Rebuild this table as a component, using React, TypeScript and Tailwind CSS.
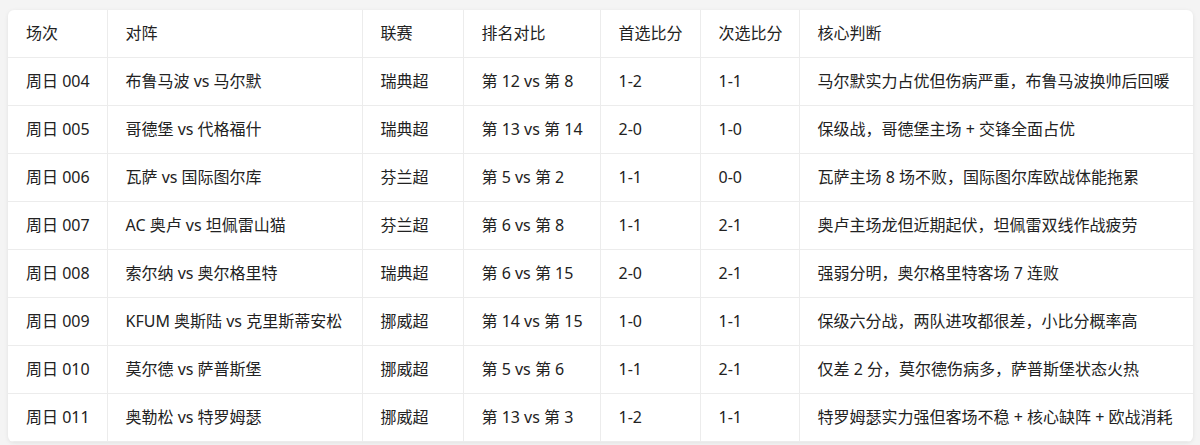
const rows = [
  ["周日 004", "布鲁马波 vs 马尔默", "瑞典超", "第 12 vs 第 8", "1-2", "1-1", "马尔默实力占优但伤病严重，布鲁马波换帅后回暖"],
  ["周日 005", "哥德堡 vs 代格福什", "瑞典超", "第 13 vs 第 14", "2-0", "1-0", "保级战，哥德堡主场 + 交锋全面占优"],
  ["周日 006", "瓦萨 vs 国际图尔库", "芬兰超", "第 5 vs 第 2", "1-1", "0-0", "瓦萨主场 8 场不败，国际图尔库欧战体能拖累"],
  ["周日 007", "AC 奥卢 vs 坦佩雷山猫", "芬兰超", "第 6 vs 第 8", "1-1", "2-1", "奥卢主场龙但近期起伏，坦佩雷双线作战疲劳"],
  ["周日 008", "索尔纳 vs 奥尔格里特", "瑞典超", "第 6 vs 第 15", "2-0", "2-1", "强弱分明，奥尔格里特客场 7 连败"],
  ["周日 009", "KFUM 奥斯陆 vs 克里斯蒂安松", "挪威超", "第 14 vs 第 15", "1-0", "1-1", "保级六分战，两队进攻都很差，小比分概率高"],
  ["周日 010", "莫尔德 vs 萨普斯堡", "挪威超", "第 5 vs 第 6", "1-1", "2-1", "仅差 2 分，莫尔德伤病多，萨普斯堡状态火热"],
  ["周日 011", "奥勒松 vs 特罗姆瑟", "挪威超", "第 13 vs 第 3", "1-2", "1-1", "特罗姆瑟实力强但客场不稳 + 核心缺阵 + 欧战消耗"],
];

const headers = ["场次", "对阵", "联赛", "排名对比", "首选比分", "次选比分", "核心判断"];

export default function App() {
  return (
    <div
      className="h-[445px] overflow-hidden bg-[#f4f4f4] pt-[10px] pl-[8px] pr-[7px]"
      style={{ fontFamily: '"Noto Sans", "Noto Sans CJK SC", sans-serif' }}
    >
      <div className="overflow-hidden rounded-[6px] bg-white shadow-[0_1px_4px_rgba(0,0,0,0.08)]">
        <table className="w-full table-fixed border-collapse text-[16px] text-[#222]">
          <colgroup>
            <col className="w-[99px]" />
            <col className="w-[255px]" />
            <col className="w-[101px]" />
            <col className="w-[137px]" />
            <col className="w-[100px]" />
            <col className="w-[99px]" />
            <col />
          </colgroup>
          <thead>
            <tr className="h-[47px]">
              {headers.map((h, i) => (
                <th
                  key={h}
                  className={`border-b border-[#ececec] px-[18px] text-left font-normal whitespace-nowrap ${i > 0 ? "border-l" : ""}`}
                >
                  {h}
                </th>
              ))}
            </tr>
          </thead>
          <tbody>
            {rows.map((r) => (
              <tr key={r[0]} className="h-[48px]">
                {r.map((c, i) => (
                  <td
                    key={i}
                    className={`border-b border-[#ececec] px-[18px] whitespace-nowrap ${i > 0 ? "border-l" : ""}`}
                  >
                    {c}
                  </td>
                ))}
              </tr>
            ))}
          </tbody>
        </table>
      </div>
    </div>
  );
}
